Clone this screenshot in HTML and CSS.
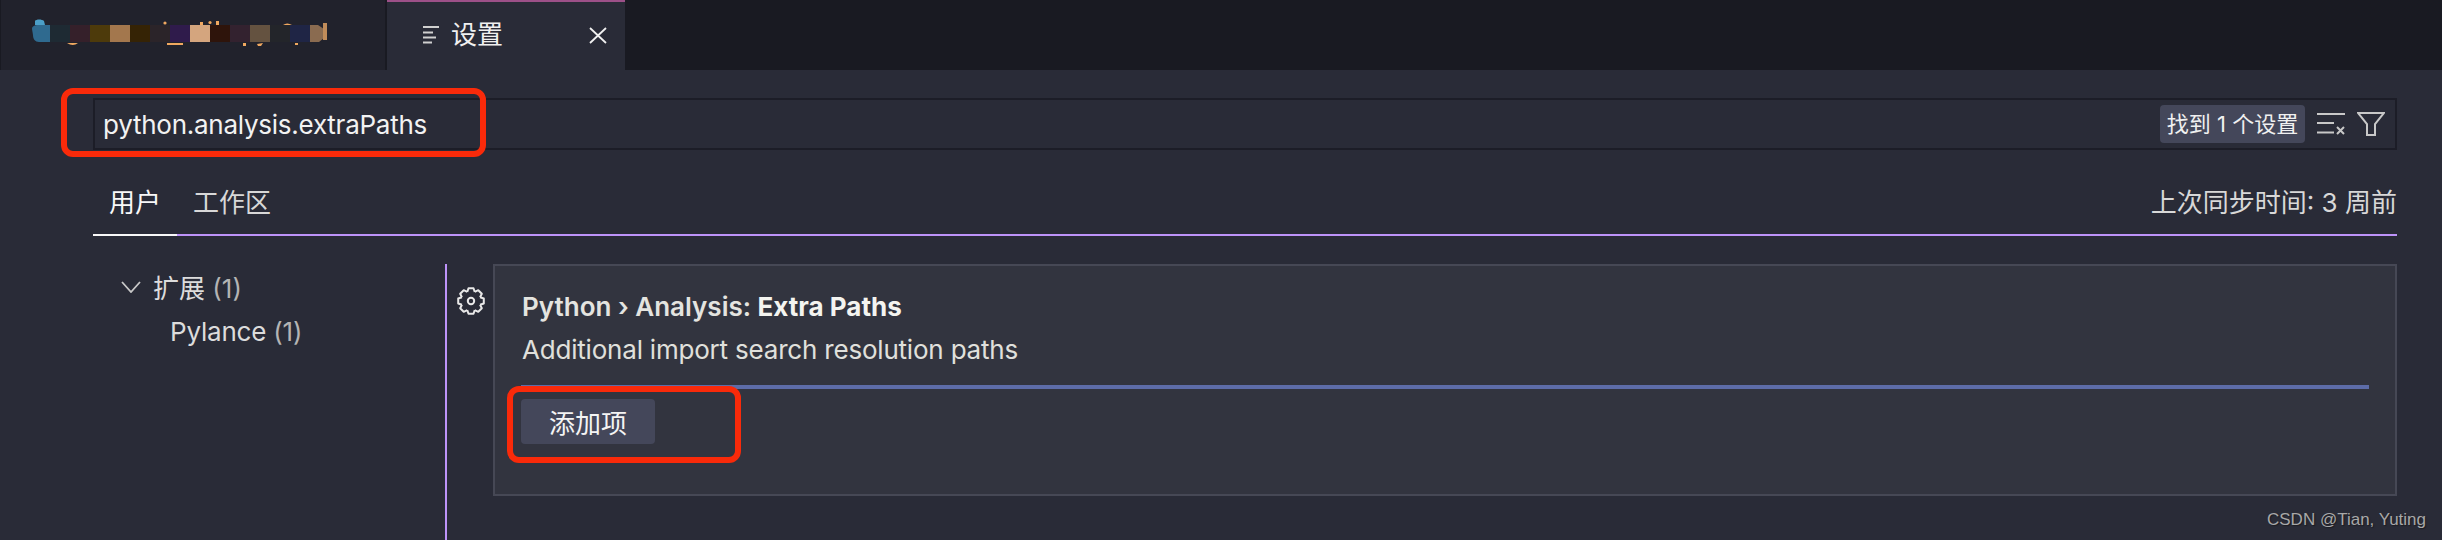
FILE: index.html
```html
<!DOCTYPE html>
<html lang="zh-CN">
<head>
    <meta charset="UTF-8">
    <meta name="viewport" content="width=device-width, initial-scale=1.0">
    <title>设置</title>
    <link rel="stylesheet" href="styles.css">
</head>
<body>
    <!-- 标签栏 -->
    <div class="tabbar">
        <div class="tab">
            <!-- 打码的文件名 -->
            <svg class="mosaic" width="300" height="30" viewBox="0 0 300 30">
                <path d="M5 2c1-2 7-2 9 0l1 4H5z" fill="#4b9fc8"/>
                <path d="M2 10c0-3 3-4 6-4h12v17H9c-4 0-6-3-6-7z" fill="#2f6a8f"/>
                <g>
                    <rect x="20" y="6" width="20" height="17" fill="#1e2a33"/>
                    <rect x="40" y="6" width="20" height="17" fill="#35202a"/>
                    <rect x="60" y="6" width="20" height="17" fill="#4d3a0b"/>
                    <rect x="80" y="6" width="20" height="17" fill="#a3774d"/>
                    <rect x="100" y="6" width="20" height="17" fill="#352305"/>
                    <rect x="120" y="6" width="20" height="17" fill="#2b2429"/>
                    <rect x="140" y="6" width="20" height="17" fill="#2f1b4b"/>
                    <rect x="160" y="6" width="20" height="17" fill="#d4a57e"/>
                    <rect x="180" y="6" width="20" height="17" fill="#2e140b"/>
                    <rect x="200" y="6" width="20" height="17" fill="#33222f"/>
                    <rect x="220" y="6" width="20" height="17" fill="#645240"/>
                    <rect x="240" y="6" width="20" height="17" fill="#23252a"/>
                    <rect x="260" y="6" width="20" height="17" fill="#1f2545"/>
                    <path d="M280 6h8l6 4v9l-5 4h-9z" fill="#8a6b50"/>
                    <rect x="293" y="4" width="4" height="17" fill="#c08c5a"/>
                </g>
                <g fill="#f0a860">
                    <circle cx="135" cy="4" r="1.600"/>
                    <rect x="170" y="3" width="3" height="3"/>
                    <circle cx="180" cy="3.500" r="1.600"/>
                    <rect x="186" y="2" width="3" height="4"/>
                    <path d="M253 6q4-3 9 0z"/>
                    <path d="M37 24h11q-5 4-11 0z"/>
                    <rect x="137" y="24" width="16" height="2"/>
                    <rect x="213" y="24" width="3" height="3"/>
                    <path d="M227 25l6-1-2 3h-3z"/>
                    <rect x="265" y="24" width="3" height="2"/>
                </g>
            </svg>
        </div>
        <div class="tab tab-active">
            <svg class="tab-icon" width="16" height="18" viewBox="0 0 16 18">
                <path d="M0 1h16M0 6.500h10M0 11.500h13M0 16.500h9" stroke="#d0d0d0" stroke-width="2" fill="none"/>
            </svg>
            <span class="tab-title">设置</span>
            <svg class="tab-close" width="18" height="17" viewBox="0 0 18 17">
                <path d="M1 1l16 15M17 1L1 16" stroke="#f0f0f0" stroke-width="1.800" fill="none"/>
            </svg>
        </div>
    </div>

    <div class="editor">
        <!-- 搜索框 -->
        <div class="search">
            <span class="search-text">python.analysis.extraPaths</span>
            <span class="search-count">找到 1 个设置</span>
            <svg class="search-clear" width="28" height="22" viewBox="0 0 28 22">
                <path d="M0 1h28M0 10h17M0 19.500h17" stroke="#c8c8c8" stroke-width="2" fill="none"/>
                <path d="M20 14l7 7M27 14l-7 7" stroke="#c8c8c8" stroke-width="2" fill="none"/>
            </svg>
            <svg class="search-filter" width="28" height="24" viewBox="0 0 28 24">
                <path d="M1 1h26L18 12v11h-8V12z" stroke="#c8c8c8" stroke-width="2" fill="none"/>
            </svg>
            <div class="mark mark-search"></div>
        </div>

        <!-- 用户 / 工作区 -->
        <div class="scopes">
            <span class="scope scope-active">用户</span>
            <span class="scope">工作区</span>
            <span class="sync">上次同步时间: 3 周前</span>
        </div>

        <div class="body-row">
            <!-- 左侧目录 -->
            <div class="tree">
                <div class="tree-row">
                    <svg class="chevron" width="20" height="12" viewBox="0 0 20 12">
                        <path d="M1 1l9 10 9-10" stroke="#c8c8c8" stroke-width="1.800" fill="none"/>
                    </svg>
                    <span>扩展 <span class="count">(1)</span></span>
                </div>
                <div class="tree-row tree-child">Pylance <span class="count">(1)</span></div>
            </div>

            <!-- 设置项 -->
            <div class="settings">
                <div class="gear-col">
                    <svg width="28" height="28" viewBox="-14 -14 28 28" fill="none" stroke="#e8e8e8" stroke-width="2" stroke-linejoin="round">
                        <defs>
                            <path id="tooth" d="M-3.750 -9.050L-2.500 -12.800H2.500L3.750 -9.050"/>
                        </defs>
                        <use href="#tooth"/>
                        <use href="#tooth" transform="rotate(45)"/>
                        <use href="#tooth" transform="rotate(90)"/>
                        <use href="#tooth" transform="rotate(135)"/>
                        <use href="#tooth" transform="rotate(180)"/>
                        <use href="#tooth" transform="rotate(225)"/>
                        <use href="#tooth" transform="rotate(270)"/>
                        <use href="#tooth" transform="rotate(315)"/>
                        <circle r="3.200"/>
                    </svg>
                </div>
                <div class="card">
                    <div class="card-title">Python › Analysis: <b>Extra Paths</b></div>
                    <div class="card-desc">Additional import search resolution paths</div>
                    <div class="card-line"></div>
                    <div class="add-wrap">
                        <button class="add-btn">添加项</button>
                        <div class="mark mark-add"></div>
                    </div>
                </div>
            </div>
        </div>
    </div>

    <div class="watermark">CSDN @Tian, Yuting</div>
</body>
</html>
```

FILE: styles.css
```css
html, body {
    margin: 0;
    height: 540px;
    overflow: hidden;
}

body {
    position: relative;
    background-color: #292b37;
    color: #e6e6e6;
    font-family: Inter, "Noto Sans CJK SC", sans-serif;
    font-size: 26px;
}

/* 标签栏 */
.tabbar {
    display: flex;
    height: 70px;
    background-color: #191a22;
}

.tab {
    display: flex;
    align-items: center;
    box-sizing: border-box;
    width: 387px;
    padding-left: 30px;
    background-color: #21222c;
    border-left: 1px solid #191a22;
    border-right: 2px solid #191a22;
}

.mosaic {
    margin-left: -1px;
    margin-top: -2px;
}

.tab-active {
    width: 238px;
    padding-left: 36px;
    background-color: #292b37;
    border: 0;
    border-top: 2px solid #9c5088;
}

.tab-icon {
    margin-top: -2px;
}

.tab-title {
    margin-left: 12px;
    color: #f0f0f0;
    line-height: 36px;
    margin-top: -2px;
}

.tab-close {
    margin-left: 86px;
    margin-top: -2px;
}

/* 主区域 */
.editor {
    padding: 28px 45px 0 93px;
}

.search {
    position: relative;
    display: flex;
    align-items: center;
    box-sizing: border-box;
    height: 52px;
    padding: 0 10px 0 8px;
    border: 2px solid #1c1d27;
}

.search-text {
    flex: 1;
    color: #f2f2f2;
    letter-spacing: -0.25px;
}

.search-count {
    display: block;
    box-sizing: border-box;
    width: 145px;
    height: 38px;
    line-height: 38px;
    text-align: center;
    font-size: 22px;
    color: #f0f0f0;
    background-color: #44475a;
    border-radius: 4px;
}

.search-clear {
    margin-left: 12px;
}

.search-filter {
    margin-left: 12px;
}

/* 红色标注框 */
.mark {
    position: absolute;
    box-sizing: border-box;
    border: 6px solid #f92a0a;
    border-radius: 12px;
}

.mark-search {
    left: -34px;
    top: -12px;
    width: 425px;
    height: 69px;
}

.mark-add {
    left: -14px;
    top: -13px;
    width: 234px;
    height: 77px;
}

.scopes {
    display: flex;
    height: 84px;
    border-bottom: 2px solid #bd93f9;
}

.scope {
    box-sizing: border-box;
    height: 86px;
    padding: 35px 16px 0;
    line-height: 36px;
    color: #d8d8d8;
}

.scope-active {
    color: #f8f8f8;
    border-bottom: 2px solid #f8f8f8;
}

.sync {
    margin-left: auto;
    padding-top: 35px;
    line-height: 36px;
    color: #d8d8d8;
}

.body-row {
    display: flex;
    margin-top: 28px;
}

.tree {
    box-sizing: border-box;
    width: 352px;
    padding-left: 28px;
}

.tree-row {
    display: flex;
    align-items: center;
    gap: 12px;
    height: 45px;
    color: #dcdcdc;
    white-space: pre;
}

.tree-child {
    display: block;
    padding-left: 49px;
    line-height: 45px;
    letter-spacing: -0.2px;
}

.count {
    color: #b4b4b4;
}

.settings {
    flex: 1;
    display: flex;
    min-height: 276px;
    border-left: 2px solid #bd93f9;
}

.gear-col {
    box-sizing: border-box;
    width: 46px;
    padding: 23px 0 0 10px;
}

.card {
    flex: 1;
    box-sizing: border-box;
    height: 232px;
    padding: 26px 26px 0;
    background-color: #32343f;
    border: 2px solid #464855;
}

.card-title {
    margin-left: 1px;
    line-height: 30px;
    font-weight: 600;
    color: #e4e4e0;
}

.card-title b {
    font-weight: 700;
    color: #f4f4f0;
}

.card-desc {
    margin: 13px 0 0 1px;
    line-height: 30px;
    color: #e0e0dc;
    letter-spacing: -0.2px;
}

.card-line {
    height: 4px;
    margin-top: 20px;
    background-color: #5d6ca8;
}

.add-wrap {
    position: relative;
    margin-top: 10px;
}

.add-btn {
    display: block;
    width: 134px;
    height: 45px;
    padding: 0;
    border: 0;
    border-radius: 4px;
    background-color: #44475a;
    color: #f4f4f4;
    font-family: inherit;
    font-size: 26px;
}

.watermark {
    position: absolute;
    right: 16px;
    bottom: 9px;
    font-family: "Liberation Sans", sans-serif;
    font-size: 17px;
    line-height: 22px;
    color: #a8a8a8;
    text-shadow: 1px 1px 1px #1c1c22;
}
```
